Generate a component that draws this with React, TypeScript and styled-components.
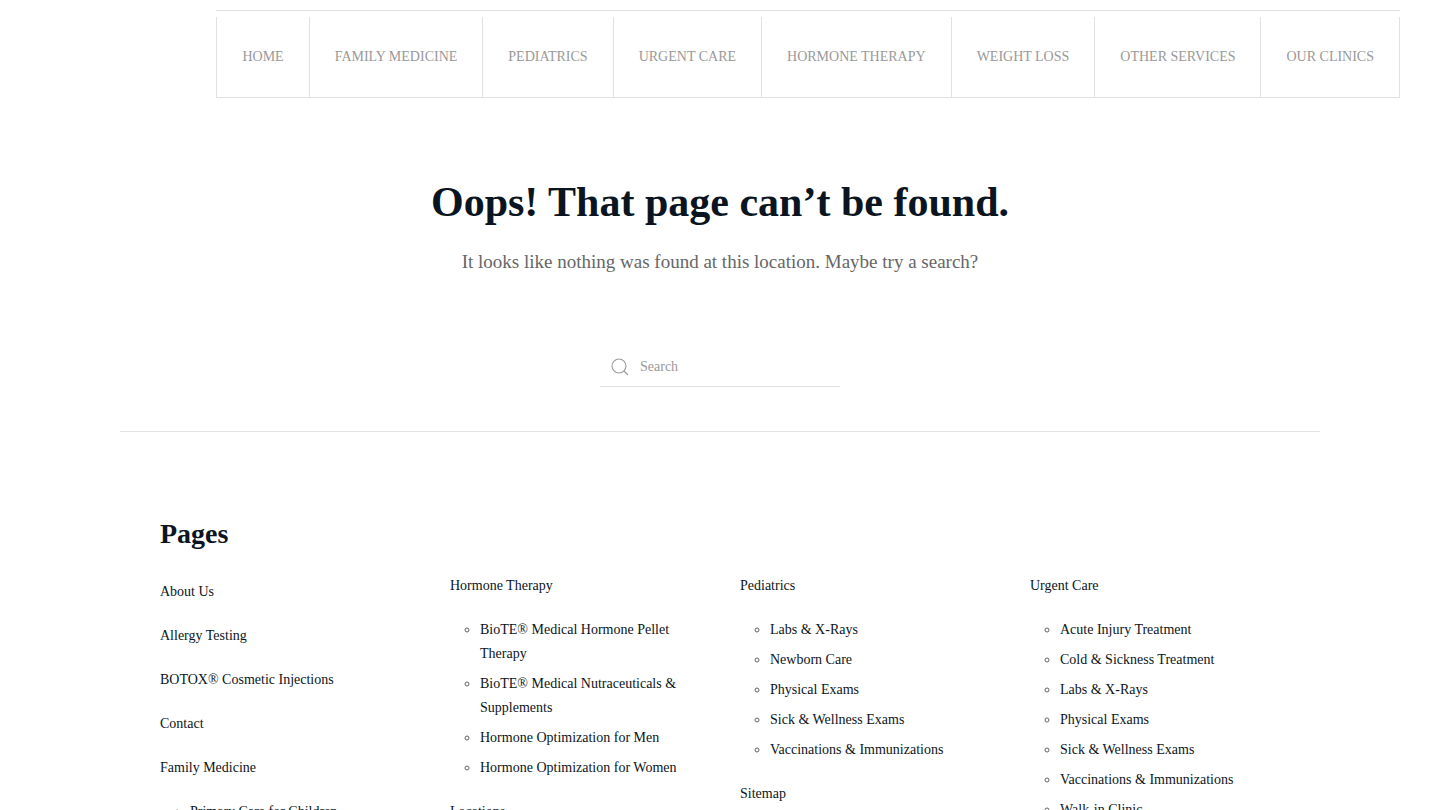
import React from "react";
import styled, { createGlobalStyle } from "styled-components";

const ink = "#0b1521";
const line = "#e2e2e2";
const muted = "#999";

const GlobalStyle = createGlobalStyle`
  *, *::before, *::after { box-sizing: border-box; }
  body {
    margin: 0;
    background: #fff;
    color: #666;
    font-family: "Liberation Serif", "Times New Roman", serif;
    font-size: 14px;
    line-height: 24px;
  }
`;

const Header = styled.header`
  display: flex;
  justify-content: flex-end;
  padding: 10px 40px 0;
`;

const Nav = styled.nav`
  border-top: 1px solid ${line};
  padding-top: 6px;
`;

const Menu = styled.ul`
  display: flex;
  margin: 0;
  padding: 0;
  list-style: none;
  border: 1px solid ${line};
  border-top: 0;
`;

const MenuItem = styled.li`
  & + & { border-left: 1px solid ${line}; }
`;

const MenuLink = styled.a`
  display: flex;
  align-items: center;
  height: 80px;
  padding: 0 25px;
  color: ${muted};
  text-decoration: none;
  text-transform: uppercase;
  white-space: nowrap;
`;

const Intro = styled.section`
  display: flex;
  flex-direction: column;
  align-items: center;
  padding: 76px 40px 44px;
  text-align: center;
`;

const Title = styled.h1`
  margin: 0;
  color: ${ink};
  font-size: 42px;
  line-height: 56px;
`;

const Lead = styled.p`
  margin: 16px 0 69px;
  font-size: 19px;
  line-height: 32px;
`;

const SearchForm = styled.form`
  display: flex;
  align-items: center;
  width: 240px;
  height: 40px;
  border-bottom: 1px solid ${line};
  color: ${muted};
`;

const SearchLabel = styled.label`
  display: flex;
  justify-content: center;
  width: 40px;
`;

const SearchInput = styled.input`
  flex: 1;
  min-width: 0;
  height: 38px;
  padding: 0;
  border: 0;
  outline: 0;
  background: transparent;
  color: ${ink};
  font: inherit;
  &::placeholder { color: ${muted}; opacity: 1; }
`;

const Sitemap = styled.section`
  max-width: 1200px;
  margin: 0 auto;
  padding: 80px 40px;
  border-top: 1px solid ${line};
`;

const SectionTitle = styled.h2`
  margin: 0 0 18px;
  color: ${ink};
  font-size: 28px;
  line-height: 44px;
`;

const Columns = styled.div`
  display: grid;
  grid-template-columns: repeat(4, minmax(0, 1fr));
  gap: 40px;
`;

const PageList = styled.ul<{ $lead?: boolean }>`
  display: flex;
  flex-direction: column;
  gap: 20px;
  margin: 0;
  padding: ${({ $lead }) => ($lead ? "6px" : "0")} 0 0;
  list-style: none;
`;

const SubList = styled.ul`
  margin: 20px 0 0;
  padding: 0 0 0 30px;
  list-style: circle;
`;

const SubItem = styled.li`
  & + & { margin-top: 6px; }
`;

const PageLink = styled.a`
  color: ${ink};
  text-decoration: none;
`;

const menu = [
  "Home", "Family Medicine", "Pediatrics", "Urgent Care",
  "Hormone Therapy", "Weight Loss", "Other Services", "Our Clinics",
];

type Page = { name: string; children?: string[] };

const columns: Page[][] = [
  [
    { name: "About Us" },
    { name: "Allergy Testing" },
    { name: "BOTOX® Cosmetic Injections" },
    { name: "Contact" },
    { name: "Family Medicine", children: ["Primary Care for Children"] },
  ],
  [
    {
      name: "Hormone Therapy",
      children: [
        "BioTE® Medical Hormone Pellet Therapy",
        "BioTE® Medical Nutraceuticals & Supplements",
        "Hormone Optimization for Men",
        "Hormone Optimization for Women",
      ],
    },
    { name: "Locations" },
  ],
  [
    {
      name: "Pediatrics",
      children: [
        "Labs & X-Rays", "Newborn Care", "Physical Exams",
        "Sick & Wellness Exams", "Vaccinations & Immunizations",
      ],
    },
    { name: "Sitemap" },
  ],
  [
    {
      name: "Urgent Care",
      children: [
        "Acute Injury Treatment", "Cold & Sickness Treatment", "Labs & X-Rays",
        "Physical Exams", "Sick & Wellness Exams",
        "Vaccinations & Immunizations", "Walk-in Clinic",
      ],
    },
  ],
];

export default function App() {
  return (
    <>
      <GlobalStyle />
      <Header>
        <Nav>
          <Menu>
            {menu.map((name) => (
              <MenuItem key={name}>
                <MenuLink href="#">{name}</MenuLink>
              </MenuItem>
            ))}
          </Menu>
        </Nav>
      </Header>
      <main>
        <Intro>
          <Title>Oops! That page can’t be found.</Title>
          <Lead>It looks like nothing was found at this location. Maybe try a search?</Lead>
          <SearchForm role="search">
            <SearchLabel htmlFor="search" aria-label="Search">
              <svg width="20" height="20" viewBox="0 0 20 20" fill="none" stroke="currentColor" aria-hidden="true">
                <circle cx="9" cy="9" r="7" strokeWidth="1.1" />
                <path d="M14 14 L18 18" strokeWidth="1.1" />
              </svg>
            </SearchLabel>
            <SearchInput id="search" type="text" placeholder="Search" />
          </SearchForm>
        </Intro>
        <Sitemap>
          <SectionTitle>Pages</SectionTitle>
          <Columns>
            {columns.map((pages, index) => (
              <PageList key={index} $lead={index === 0}>
                {pages.map(({ name, children }) => (
                  <li key={name}>
                    <PageLink href="#">{name}</PageLink>
                    {children && (
                      <SubList>
                        {children.map((child) => (
                          <SubItem key={child}>
                            <PageLink href="#">{child}</PageLink>
                          </SubItem>
                        ))}
                      </SubList>
                    )}
                  </li>
                ))}
              </PageList>
            ))}
          </Columns>
        </Sitemap>
      </main>
    </>
  );
}
